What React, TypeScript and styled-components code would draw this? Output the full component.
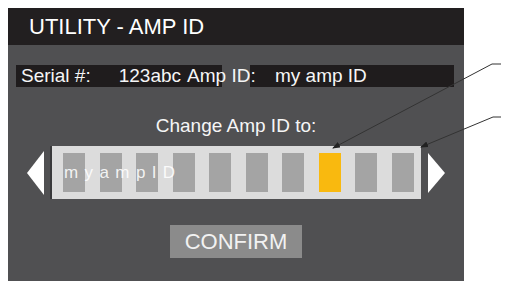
import styled, { createGlobalStyle } from 'styled-components';

const GlobalStyle = createGlobalStyle`
  body {
    margin: 8px;
    background: #ffffff;
    font-family: "Liberation Sans", Arial, sans-serif;
  }
`;

const Page = styled.div`
  position: relative;
  width: 501px;
`;

const Panel = styled.div`
  width: 456px;
  height: 273px;
  background-color: #505052;
  display: flex;
  flex-direction: column;
`;

const TitleBar = styled.div`
  height: 37px;
  background-color: #221f20;
  color: #ffffff;
  font-size: 22px;
  display: flex;
  align-items: center;
  padding-left: 21px;
`;

const InfoRow = styled.div`
  display: flex;
  height: 22px;
  margin-top: 20px;
  padding-left: 8px;
`;

const InfoBox = styled.div<{ $width: number; $pad: number; $offset?: number; $front?: boolean }>`
  width: ${({ $width }) => $width}px;
  padding-left: ${({ $pad }) => $pad}px;
  margin-left: ${({ $offset = 0 }) => $offset}px;
  z-index: ${({ $front }) => ($front ? 1 : 0)};
  background-color: #1f1c1d;
  color: #f6f6f6;
  font-size: 19px;
  line-height: 22px;
  white-space: nowrap;
  overflow: visible;
  box-sizing: border-box;
  display: flex;
`;

const InfoValue = styled.span<{ $left: number }>`
  margin-left: ${({ $left }) => $left}px;
`;

const ChangeLabel = styled.div`
  margin-top: 28px;
  text-align: center;
  color: #f6f6f6;
  font-size: 19px;
  line-height: 22px;
`;

const StripRow = styled.div`
  display: flex;
  align-items: center;
  margin-top: 9px;
  padding-left: 19px;
`;

const Arrow = styled.div<{ $dir: 'left' | 'right'; $h: number }>`
  width: 0;
  height: 0;
  border-top: ${({ $h }) => $h / 2}px solid transparent;
  border-bottom: ${({ $h }) => $h / 2}px solid transparent;
  ${({ $dir }) =>
    $dir === 'left'
      ? 'border-right: 17px solid #ffffff; margin-right: 6px;'
      : 'border-left: 17px solid #ffffff; margin-left: 7px;'}
`;

const Strip = styled.div`
  position: relative;
  width: 371px;
  height: 53px;
  box-sizing: border-box;
  padding: 7px 0 7px 11px;
  background-color: #dcdcdc;
  border-left: 2px solid #3a3a3c;
  display: flex;
  gap: 14.5px;
`;

const Slot = styled.div<{ $active?: boolean }>`
  width: 22px;
  height: 39px;
  background-color: ${({ $active }) => ($active ? '#f9b90f' : '#a4a4a4')};
`;

const SlotText = styled.div`
  position: absolute;
  left: 12px;
  top: 50%;
  transform: translateY(-50%);
  color: rgba(255, 255, 255, 0.88);
  font-size: 17px;
  letter-spacing: 6.4px;
`;

const ConfirmButton = styled.button`
  align-self: center;
  margin-top: 26px;
  width: 132px;
  height: 33px;
  border: none;
  background-color: #8b8b8b;
  color: #f2f2f2;
  font-family: "Liberation Sans", Arial, sans-serif;
  font-size: 22px;
  padding: 0;
`;

const Callouts = styled.svg`
  position: absolute;
  left: -8px;
  top: -8px;
  overflow: visible;
  pointer-events: none;
`;

const slots = Array.from({ length: 10 }, (_, i) => i);
const activeSlot = 7;

export default function App() {
  return (
    <>
      <GlobalStyle />
      <Page>
        <Panel>
          <TitleBar>UTILITY - AMP ID</TitleBar>
          <InfoRow>
            <InfoBox $width={206} $pad={5} $front>
              Serial #:
              <InfoValue $left={28}>123abc</InfoValue>
              <InfoValue $left={6}>Amp ID:</InfoValue>
            </InfoBox>
            <InfoBox $width={204} $pad={25} $offset={28}>
              my amp ID
            </InfoBox>
          </InfoRow>
          <ChangeLabel>Change Amp ID to:</ChangeLabel>
          <StripRow>
            <Arrow $dir="left" $h={44} />
            <Strip>
              {slots.map((i) => (
                <Slot key={i} $active={i === activeSlot} />
              ))}
              <SlotText>myampID</SlotText>
            </Strip>
            <Arrow $dir="right" $h={40} />
          </StripRow>
          <ConfirmButton>CONFIRM</ConfirmButton>
        </Panel>
        <Callouts width="509" height="282" viewBox="0 0 509 282">
          <defs>
            <marker id="head" markerWidth="8" markerHeight="6" refX="7" refY="3" orient="auto">
              <path d="M0,0 L8,3 L0,6 Z" fill="#222" />
            </marker>
          </defs>
          <polyline
            points="507,64 492,64 333,148"
            fill="none"
            stroke="#333"
            strokeWidth="1"
            markerEnd="url(#head)"
          />
          <polyline
            points="507,117 493,117 421,147"
            fill="none"
            stroke="#333"
            strokeWidth="1"
            markerEnd="url(#head)"
          />
        </Callouts>
      </Page>
    </>
  );
}
